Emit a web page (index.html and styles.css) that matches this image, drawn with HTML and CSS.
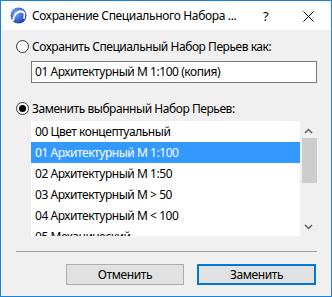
FILE: index.html
```html
<!DOCTYPE html>
<html lang="ru">
  <head>
    <meta charset="UTF-8" />
    <title>Сохранение Специального Набора Перьев</title>
    <link rel="stylesheet" href="styles.css">
  </head>

  <body>
    <div class="window">
      <div class="titlebar">
        <svg class="logo" width="17" height="17" viewBox="0 0 17 17">
          <defs>
            <radialGradient id="lg" cx="35%" cy="35%" r="70%">
              <stop offset="0" stop-color="#7aa8ff" />
              <stop offset="1" stop-color="#1b3fa8" />
            </radialGradient>
          </defs>
          <circle cx="8.5" cy="8.5" r="8" fill="url(#lg)" />
          <path d="M3 14 C4 6 10 2 14.5 6" stroke="#fff" stroke-width="2" fill="none" />
          <path d="M14.5 6 L14 12" stroke="#fff" stroke-width="1.6" fill="none" />
        </svg>
        <span class="title">Сохранение Специального Набора ...</span>
        <span class="help">?</span>
        <svg class="close" width="11" height="11" viewBox="0 0 11 11">
          <path d="M0.5 0.5 L10.5 10.5 M10.5 0.5 L0.5 10.5" stroke="#000" stroke-width="1" />
        </svg>
      </div>

      <div class="content">
        <label class="option">
          <span class="radio"></span>
          Сохранить Специальный Набор Перьев как:
        </label>
        <div class="field">01 Архитектурный М 1:100 (копия)</div>

        <label class="option second">
          <span class="radio checked"></span>
          Заменить выбранный Набор Перьев:
        </label>
        <div class="listbox">
          <ul class="items">
            <li>00 Цвет концептуальный</li>
            <li class="selected">01 Архитектурный М 1:100</li>
            <li>02 Архитектурный М 1:50</li>
            <li>03 Архитектурный М &gt; 50</li>
            <li>04 Архитектурный М &lt; 100</li>
            <li>05 Механический</li>
          </ul>
          <div class="scrollbar">
            <svg class="arrow" width="9" height="6" viewBox="0 0 9 6">
              <path d="M1 5 L4.5 1.5 L8 5" stroke="#606060" stroke-width="1.5" fill="none" />
            </svg>
            <div class="track"><div class="thumb"></div></div>
            <svg class="arrow" width="9" height="6" viewBox="0 0 9 6">
              <path d="M1 1 L4.5 4.5 L8 1" stroke="#606060" stroke-width="1.5" fill="none" />
            </svg>
          </div>
        </div>

        <div class="separator"></div>

        <div class="buttons">
          <button class="btn">Отменить</button>
          <button class="btn default">Заменить</button>
        </div>
      </div>
    </div>
  </body>
</html>
```

FILE: styles.css
```css
body {
  margin: 0;
  font-family: "Noto Sans", sans-serif;
  font-size: 12px;
  letter-spacing: -0.45px;
  color: #000;
}

.window {
  width: 332px;
  height: 297px;
  box-sizing: border-box;
  border: 1px solid #1883d7;
  background-color: #f0f0f0;
  display: flex;
  flex-direction: column;
}

.titlebar {
  height: 29px;
  background-color: #fff;
  display: flex;
  align-items: center;
  padding-left: 9px;
}

.logo {
  margin-right: 5px;
}

.title {
  font-size: 12px;
  letter-spacing: -0.35px;
  width: 231px;
}

.help {
  font-size: 13px;
  width: 40px;
}

.close {
  margin-top: 1px;
}

.content {
  padding: 7px 14px 0 15px;
  display: flex;
  flex-direction: column;
}

.option {
  height: 18px;
  display: flex;
  align-items: center;
  gap: 3px;
}

.option.second {
  margin-top: 16px;
}

.radio {
  width: 11px;
  height: 11px;
  border: 1px solid #333;
  border-radius: 50%;
  background-color: #fff;
  display: flex;
  align-items: center;
  justify-content: center;
}

.radio.checked::after {
  content: "";
  width: 7px;
  height: 7px;
  border-radius: 50%;
  background-color: #000;
}

.field {
  margin: 6px 0 0 15px;
  height: 20px;
  border: 1px solid #7a7a7a;
  background-color: #fff;
  padding-left: 3px;
  line-height: 20px;
}

.listbox {
  margin: 4px 0 0 15px;
  height: 115px;
  display: flex;
  overflow: hidden;
}

.items {
  list-style: none;
  margin: 0;
  padding: 0;
  flex: 1;
  background-color: #fff;
  overflow: hidden;
}

.items li {
  height: 21px;
  line-height: 21px;
  padding-left: 4px;
  white-space: nowrap;
}

.items li.selected {
  background-color: #3399ff;
  color: #fff;
}

.scrollbar {
  width: 17px;
  display: flex;
  flex-direction: column;
  align-items: center;
}

.arrow {
  margin: 7px 0 4px;
}

.scrollbar .arrow:last-child {
  margin: 4px 0 6px;
}

.track {
  flex: 1;
  width: 15px;
  padding-left: 1px;
}

.thumb {
  height: 45px;
  background-color: #cdcdcd;
}

.separator {
  margin-top: 15px;
  height: 1px;
  background-color: #a0a0a0;
}

.buttons {
  margin-top: 12px;
  display: flex;
  justify-content: flex-end;
  gap: 13px;
  padding-right: 1px;
}

.btn {
  width: 118px;
  height: 21px;
  box-sizing: border-box;
  border: 1px solid #adadad;
  background-color: #e1e1e1;
  font-family: "Noto Sans", sans-serif;
  font-size: 12px;
  letter-spacing: -0.4px;
  padding: 0;
}

.btn.default {
  width: 119px;
  border: 2px solid #0078d7;
}
```
